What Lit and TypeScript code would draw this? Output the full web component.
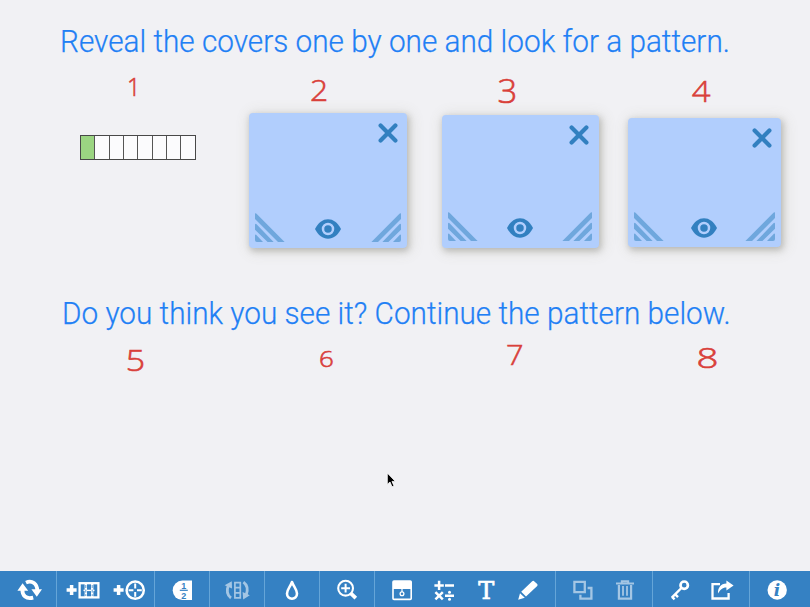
import { LitElement, html, svg, css } from "lit";
import { customElement, property } from "lit/decorators.js";
import { styleMap } from "lit/directives/style-map.js";

const BLUE = "#3581c3";

const icons: Record<string, unknown> = {
  refresh: svg`<g fill="none" stroke="#fff" stroke-width="3.8"><path d="M13.4 18.5C13.2 24.6 17 28.4 24.2 26.6"/><path d="M17 11.6C23 8.8 28.4 13 28.2 19.5"/></g><path fill="#fff" d="M8.4 19.8L13.6 12.2L19.2 19.8ZM22.4 18.2L33 18.2L27.8 25.8Z"/>`,
  addBar: svg`<path stroke="#fff" stroke-width="3.5" d="M7.6 19h10M12.6 14v10"/><rect x="20.6" y="12.2" width="18.8" height="14.2" fill="none" stroke="#fff" stroke-width="2.3"/><path stroke="#fff" stroke-width="2.4" d="M26.8 12v14.6M33.2 12v14.6"/><path stroke="#fff" stroke-width="1.4" d="M24.5 19.4h11"/><path stroke="${BLUE}" stroke-width=".8" stroke-dasharray="3 1.6" d="M26.8 14v11M33.2 14v11"/>`,
  addCircle: svg`<path stroke="#fff" stroke-width="3.5" d="M7.6 19h10M12.6 14v10"/><circle cx="29.2" cy="19.2" r="8.6" fill="none" stroke="#fff" stroke-width="2.5"/><path stroke="#fff" stroke-width="2" d="M29.2 12.6v4.8M29.2 21v4.8M22.6 19.2h4.8M31 19.2h4.8"/>`,
  half: svg`<path fill="#fff" d="M31 9.6V29H21.4A9.7 9.7 0 0 1 21.4 9.6Z"/><text x="22.8" y="17.9" class="frac">1</text><path stroke="${BLUE}" stroke-width="1.2" d="M18.8 19.3h8"/><text x="22.8" y="27.5" class="frac">2</text>`,
  rotate: svg`<g opacity=".55"><path fill="none" stroke="#fff" stroke-width="2.8" d="M15 27C10.8 24 10.6 19 12.4 14M27.4 11.2C31.6 14.2 32 19 30.2 24"/><path fill="#fff" d="M8.6 14.2L15.8 10.2L16 17.4ZM26.6 21L33.8 24.2L27.2 28.4Z"/><path fill="none" stroke="#fff" stroke-width="1.7" d="M18.9 11.6h5.4v15.2h-5.4ZM18.9 16.6h5.4M18.9 21.8h5.4"/></g>`,
  drop: svg`<path fill="none" stroke="#fff" stroke-width="2.6" stroke-linejoin="round" d="M21 11C19.4 15.6 16 18.2 16 22.6C16 25.8 18.2 27.7 21 27.7S26 25.8 26 22.6C26 18.2 22.6 15.6 21 11Z"/>`,
  zoom: svg`<circle cx="19.6" cy="17.2" r="7.4" fill="none" stroke="#fff" stroke-width="2.1"/><path stroke="#fff" stroke-width="2" d="M15.2 17.2h8.8M19.6 12.8v8.8"/><path stroke="#fff" stroke-width="3.8" d="M24.6 22.2L29.8 27.2"/>`,
  cover: svg`<rect x="12" y="10" width="18.2" height="18.4" rx="1" fill="none" stroke="#fff" stroke-width="1.6"/><path fill="#fff" d="M12 10h18.2v8H12z"/><path stroke="#fff" stroke-width="1.2" d="M21 17v4"/><circle cx="21" cy="22.8" r="1.9" fill="none" stroke="#fff" stroke-width="1.3"/>`,
  ops: svg`<path stroke="#fff" stroke-width="2.5" d="M11.4 14.4h9.4M16.1 9.7v9.4M22 14.4h9M12.4 21.1l7.4 7.2M19.8 21.1l-7.4 7.2M22 24.7h9"/><circle cx="26.5" cy="21.2" r="1.5" fill="#fff"/><circle cx="26.5" cy="28.2" r="1.5" fill="#fff"/>`,
  text: svg`<text x="21.2" y="28.2" class="tee">T</text>`,
  pencil: svg`<path fill="#fff" d="M11.2 28.8L13 22.2L17.8 26.8ZM14.2 20.8L25.2 10.3Q26.3 9.4 27.4 10.4L30.2 13.1Q31 14 30.2 15L19 25.6Z"/>`,
  copy: svg`<g opacity=".55" fill="none" stroke="#fff" stroke-width="2.3"><path d="M12.4 10.9h10.4v10.2H12.4Z"/><path d="M25.6 17h3.8v10.7H18.4v-4"/></g>`,
  trash: svg`<g opacity=".55" fill="none" stroke="#fff"><path stroke-width="2" d="M12 12.4h18M17.8 12V10.2h6.4V12"/><path stroke-width="2.2" d="M14.9 14V27.6h12.2V14"/><path stroke-width="1.8" d="M19 15v9.8M23 15v9.8"/></g>`,
  key: svg`<circle cx="25.2" cy="14.2" r="3.7" fill="none" stroke="#fff" stroke-width="2.7"/><path fill="none" stroke="#fff" stroke-width="2.4" d="M22.4 17L12.8 26.6M16 23.2l3 3M13 25.8l2.6 2.6"/>`,
  share: svg`<path fill="none" stroke="#fff" stroke-width="2.3" d="M19 13.2H11.5V27.5H27.6V22"/><path fill="#fff" d="M25.4 9.4L32.6 14.4L25.4 19.6V16.6C21 16.6 19.4 19 17 22.6C16.8 16.6 19.6 12.6 25.4 12.4Z"/>`,
  info: svg`<circle cx="21.2" cy="19" r="9.7" fill="#fff"/><text x="21.1" y="25.2" class="eye">i</text>`,
};

@customElement("tool-icon")
class ToolIcon extends LitElement {
  @property() name = "";
  @property({ type: Number }) size = 42;
  static styles = css`
    :host { display: block; }
    svg { display: block; }
    .frac { font: bold 9px "Liberation Sans", sans-serif; fill: #3581c3; text-anchor: middle; }
    .tee { font: 24px "DejaVu Serif", serif; fill: #fff; stroke: #fff; stroke-width: 0.7px; text-anchor: middle; }
    .eye { font: italic bold 17px "DejaVu Serif", serif; fill: #3581c3; text-anchor: middle; }
  `;
  render() {
    return html`<svg width=${this.size} height="36" viewBox="0 0 ${this.size} 36">${icons[this.name]}</svg>`;
  }
}

@customElement("cover-card")
class CoverCard extends LitElement {
  static styles = css`
    :host {
      box-sizing: border-box; display: flex; flex-direction: column; justify-content: space-between;
      padding: 9.6px 6.5px 6.5px 6px; border-radius: 4px; background: #b1cefd;
      box-shadow: 1.5px 2.5px 6px rgba(60, 60, 50, 0.26), 2px 2px 14px 3px rgba(110, 110, 70, 0.12);
    }
    svg { display: block; }
    .close { align-self: flex-end; margin-right: 3px; }
    .row { display: flex; justify-content: space-between; align-items: flex-end; }
    .flip { transform: scaleX(-1); }
    .look { margin-bottom: 3px; }
  `;
  render() {
    const grip = svg`<path fill="#6fa7dd" d="M0 0.6Q0.6 -.4 1.8 1L29.6 29H23L0 6ZM0 11.4Q.6 10 1.8 11.6L18.6 29H12.6L0 16.8ZM0 22.2Q.6 20.8 1.8 22.4L8 29H2Q0 29 0 27Z"/>`;
    return html`
      <svg class="close" width="20" height="20" viewBox="0 0 20 20"><path stroke="#3280c0" stroke-width="4.2" stroke-linecap="round" d="M2.6 2.6L17.4 17.4M17.4 2.6L2.6 17.4"/></svg>
      <div class="row">
        <svg width="30" height="29">${grip}</svg>
        <svg class="look" width="26" height="20" viewBox="0 0 26 20">
          <path fill="#3280c0" d="M0 10C3.4 3.6 7.6 .3 13 .3S22.6 3.6 26 10C22.6 16.4 18.4 19.7 13 19.7S3.4 16.4 0 10Z"/>
          <circle cx="13" cy="10" r="5" fill="none" stroke="#b1cefd" stroke-width="2.5"/>
        </svg>
        <svg class="flip" width="30" height="29">${grip}</svg>
      </div>`;
  }
}

const groups: { width: number; size?: number; tools: string[] }[] = [
  { width: 57, tools: ["refresh"] },
  { width: 98, size: 47, tools: ["addBar", "addCircle"] },
  { width: 55, tools: ["half"] },
  { width: 55, tools: ["rotate"] },
  { width: 55, tools: ["drop"] },
  { width: 55, tools: ["zoom"] },
  { width: 181, tools: ["cover", "ops", "text", "pencil"] },
  { width: 97, tools: ["copy", "trash"] },
  { width: 97, tools: ["key", "share"] },
  { width: 54, tools: ["info"] },
];

const covers = [
  { left: 249, top: 113, width: 158, height: 135.3 },
  { left: 441.7, top: 115.3, width: 157, height: 132.4 },
  { left: 627.7, top: 118, width: 153.4, height: 129.3 },
];

// label, horizontal centre, baseline, font size, horizontal stretch
const labels: [string, number, number, number, number][] = [
  ["1", 133.8, 96, 25, 0.95],
  ["2", 319, 101, 29, 1.1],
  ["3", 507.5, 103, 33, 1.05],
  ["4", 701, 101.5, 28.5, 1.15],
  ["5", 135.3, 371.2, 29.5, 1.15],
  ["6", 326.3, 366.6, 22.5, 1.15],
  ["7", 514.8, 365, 28, 1.1],
  ["8", 707.6, 368, 27.5, 1.4],
];

@customElement("app-root")
class AppRoot extends LitElement {
  static styles = css`
    :host { display: flex; flex-direction: column; width: 810px; height: 607px; overflow: hidden; background: #f1f1f4; }
    .board { position: relative; flex: 1; }
    .prompt {
      position: absolute; margin: 0; white-space: nowrap; color: #1f80f5;
      font: 300 31px/36px Roboto, sans-serif; -webkit-text-stroke: 0.25px #1f80f5;
      transform: scaleX(0.9592); transform-origin: left;
    }
    .first { left: 59.5px; top: 24px; }
    .second { left: 61.5px; top: 296px; }
    .ink { position: absolute; inset: 0; }
    .digit { font-family: "Open Sans", "Noto Sans", sans-serif; font-weight: 300; fill: #d9403a; stroke: #d9403a; stroke-width: 0.6px; text-anchor: middle; }
    .strip {
      position: absolute; left: 80px; top: 134.5px; box-sizing: border-box; width: 115.5px; height: 25.5px;
      display: flex; border: 1px solid #484848; background: #fbfbfd;
    }
    .cell { flex: 1; border-right: 1px solid #555; }
    .cell:last-child { border-right: 0; }
    .filled { background: #9bd582; }
    .cover { position: absolute; }
    .cursor { position: absolute; left: 386px; top: 471px; }
    .bar { display: flex; height: 36px; background: #3581c3; }
    .group { box-sizing: border-box; display: flex; justify-content: center; border-right: 1px solid #65a5d8; }
    .group:first-child { padding-left: 3px; }
    .group:nth-child(n + 3) { padding-right: 1px; }
    .group:last-child { border-right: 0; }
  `;
  render() {
    return html`
      <main class="board">
        <h1 class="prompt first">Reveal the covers one by one and look for a pattern.</h1>
        <h2 class="prompt second">Do you think you see it? Continue the pattern below.</h2>
        <div class="strip">
          ${Array.from({ length: 8 }, (_, i) => html`<div class="cell ${i === 0 ? "filled" : ""}"></div>`)}
        </div>
        ${covers.map((c) => html`<cover-card class="cover" style=${styleMap({ left: c.left + "px", top: c.top + "px", width: c.width + "px", height: c.height + "px" })}></cover-card>`)}
        <svg class="ink" width="810" height="571">
          ${labels.map(([t, x, y, s, k]) => svg`<text class="digit" font-size=${s} transform="translate(${x} ${y}) scale(${k} 1)">${t}</text>`)}
        </svg>
        <svg class="cursor" width="12" height="20" viewBox="0 0 12 20">
          <path fill="#000" stroke="#fff" stroke-width=".8" d="M1.3 2L1.3 13.4L4 11L6 15.8L8 14.9L6 10.4H9.4Z"/>
        </svg>
      </main>
      <nav class="bar">
        ${groups.map((g) => html`<div class="group" style=${styleMap({ width: g.width + "px" })}>
          ${g.tools.map((t) => html`<tool-icon name=${t} size=${g.size ?? 42}></tool-icon>`)}
        </div>`)}
      </nav>`;
  }
}
